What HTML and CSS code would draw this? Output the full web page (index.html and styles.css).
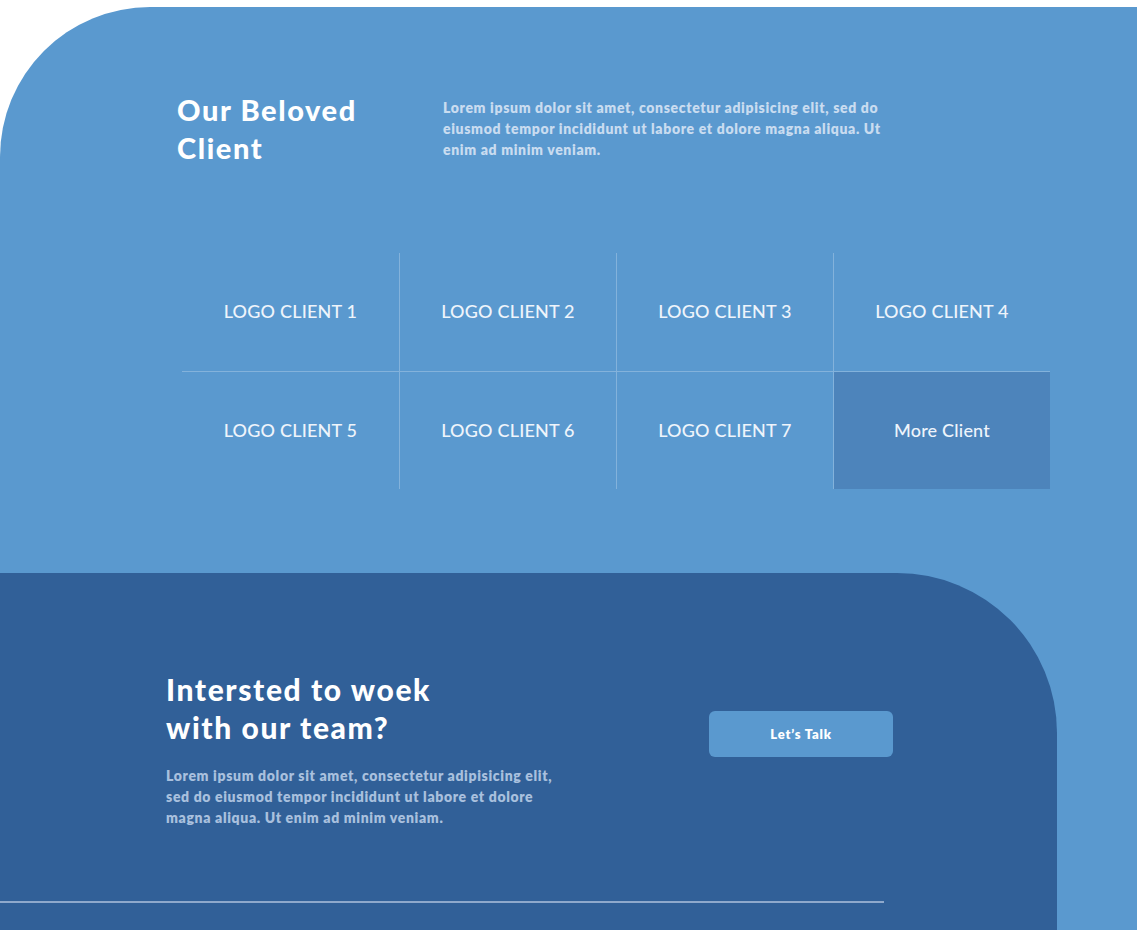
FILE: index.html
```html
<!DOCTYPE html>
<html lang="en">
<head>
<meta charset="utf-8">
<title>Our Beloved Client</title>
<link rel="stylesheet" href="styles.css">
</head>
<body>
  <section class="clients">
    <div class="clients-head">
      <h2 class="clients-title">Our Beloved<br>Client</h2>
      <p class="clients-text">Lorem ipsum dolor sit amet, consectetur adipisicing elit, sed do eiusmod tempor incididunt ut labore et dolore magna aliqua. Ut enim ad minim veniam.</p>
    </div>
    <div class="logo-grid">
      <div class="logo-cell">LOGO CLIENT 1</div>
      <div class="logo-cell">LOGO CLIENT 2</div>
      <div class="logo-cell">LOGO CLIENT 3</div>
      <div class="logo-cell">LOGO CLIENT 4</div>
      <div class="logo-cell">LOGO CLIENT 5</div>
      <div class="logo-cell">LOGO CLIENT 6</div>
      <div class="logo-cell">LOGO CLIENT 7</div>
      <div class="logo-cell logo-more">More Client</div>
    </div>
    <div class="cta">
      <div class="cta-row">
        <div class="cta-copy">
          <h2 class="cta-title">Intersted to woek<br>with our team?</h2>
          <p class="cta-text">Lorem ipsum dolor sit amet, consectetur adipisicing elit, sed do eiusmod tempor incididunt ut labore et dolore magna aliqua. Ut enim ad minim veniam.</p>
        </div>
        <a class="cta-button" href="#">Let’s Talk</a>
      </div>
      <div class="cta-line"></div>
    </div>
  </section>
</body>
</html>
```

FILE: styles.css
```css
* { box-sizing: border-box; }

html, body {
  margin: 0;
  padding: 0;
  background: #ffffff;
}

body {
  font-family: "Lato", "Liberation Sans", sans-serif;
  height: 935px;
  overflow: hidden;
}

.clients {
  margin: 7px 7px 0 0;
  background: #5a99cf;
  border-top-left-radius: 150px;
  padding-top: 84px;
  display: flex;
  flex-direction: column;
}

.clients-head {
  display: flex;
  padding-left: 177px;
}

.clients-title {
  margin: 0;
  width: 266px;
  font-size: 29px;
  line-height: 38px;
  font-weight: 900;
  color: #ffffff;
  letter-spacing: 1.6px;
}

.clients-text {
  margin: 6px 0 0 0;
  width: 448px;
  font-size: 14px;
  line-height: 21px;
  font-weight: 800;
  color: #c9dcf0;
  letter-spacing: 0.65px;
}

.logo-grid {
  margin: 86px 0 0 182px;
  width: 868px;
  display: grid;
  grid-template-columns: repeat(4, 217px);
  grid-template-rows: repeat(2, 118px);
}

.logo-cell {
  display: flex;
  align-items: center;
  justify-content: center;
  padding-bottom: 2px;
  font-size: 18px;
  font-weight: 500;
  color: #eef4fb;
  letter-spacing: 0.2px;
  background-clip: padding-box;
}

.logo-cell:nth-child(4n+2),
.logo-cell:nth-child(4n+3),
.logo-cell:nth-child(4n+4) {
  border-left: 1px solid rgba(255, 255, 255, 0.25);
}

.logo-cell:nth-child(n+5) {
  border-top: 1px solid rgba(255, 255, 255, 0.25);
}

.logo-more {
  background-color: #4d84bb;
}

.cta {
  margin: 84px 80px 0 0;
  height: 357px;
  background: #316098;
  border-top-right-radius: 160px;
  display: flex;
  flex-direction: column;
  padding-top: 97px;
}

.cta-row {
  display: flex;
  padding-left: 166px;
}

.cta-copy {
  width: 543px;
}

.cta-title {
  margin: 0;
  font-size: 30px;
  line-height: 38px;
  font-weight: 900;
  color: #ffffff;
  letter-spacing: 1.6px;
}

.cta-text {
  margin: 19px 0 0 0;
  width: 400px;
  font-size: 14px;
  line-height: 21px;
  font-weight: 800;
  color: #a9c0de;
  letter-spacing: 0.65px;
}

.cta-button {
  margin-top: 41px;
  width: 184px;
  height: 46px;
  border-radius: 6px;
  background: #5a99cf;
  color: #ffffff;
  font-size: 13px;
  font-weight: 800;
  letter-spacing: 0.8px;
  text-decoration: none;
  display: flex;
  align-items: center;
  justify-content: center;
}

.cta-line {
  margin-top: auto;
  margin-bottom: 27px;
  width: 884px;
  height: 2px;
  background: #8fa9cc;
}
```
